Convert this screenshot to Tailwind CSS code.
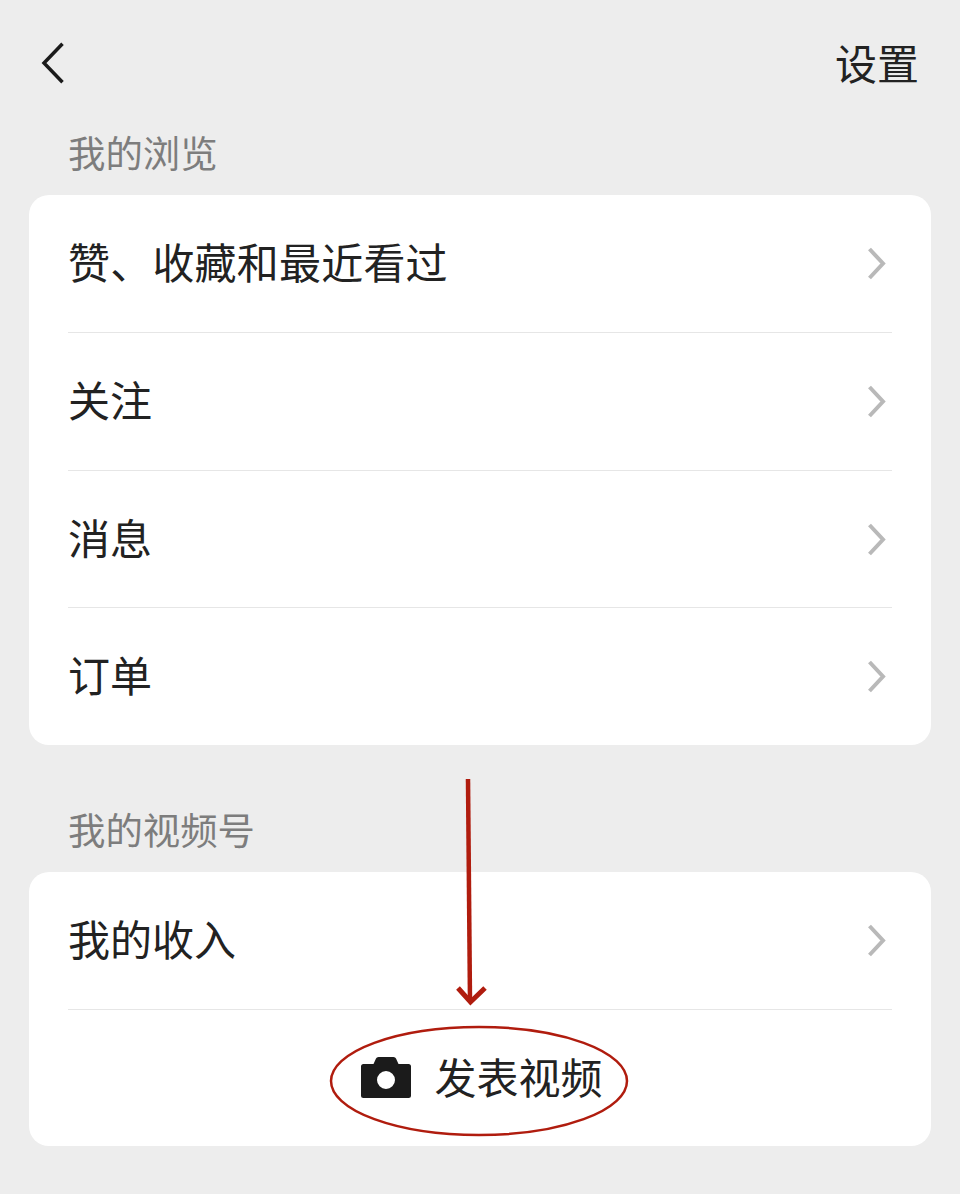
<!DOCTYPE html>
<html lang="zh-CN">
<head>
    <meta charset="UTF-8">
    <meta name="viewport" content="width=device-width, initial-scale=1.0">
    <title>我的</title>
    <script src="https://cdn.jsdelivr.net/npm/@tailwindcss/browser@4"></script>
</head>
<body class="bg-[#ededed] text-[#222222] font-['Noto_Sans_CJK_SC','Noto_Sans',sans-serif]">

<div class="relative w-[960px] h-[1194px] overflow-hidden px-[29px]">

    <!-- Header -->
    <div class="flex items-center justify-between h-[126px] pl-[10px] pr-[12px]">
        <svg class="w-[26px] h-[44px]" viewBox="0 0 26 44" fill="none" stroke="#1b1b1b" stroke-width="3.5">
            <path d="M23.5 2.8 L5 22 L23.5 41.2"/>
        </svg>
        <span class="text-[42px] leading-none pb-[2px]">设置</span>
    </div>

    <!-- My browsing -->
    <h2 class="h-[69px] pl-[39px] pt-[4px] text-[37.4px] leading-[44px] font-normal text-[#7d7d7d]">我的浏览</h2>
    <div class="bg-white rounded-[20px] px-[39px] divide-y divide-[#e6e6e6]">
        <div class="flex items-center justify-between h-[137.5px]">
            <span class="text-[42px] leading-none pb-[4px] tracking-[0.2px]">赞、收藏和最近看过</span>
            <svg class="w-[24px] h-[36px] mr-[2px]" viewBox="0 0 24 36" fill="none" stroke="#b9b9b9" stroke-width="4"><path d="M3.5 4 L17 18.5 L3.5 33"/></svg>
        </div>
        <div class="flex items-center justify-between h-[138px]">
            <span class="text-[42px] leading-none pb-[4px]">关注</span>
            <svg class="w-[24px] h-[36px] mr-[2px]" viewBox="0 0 24 36" fill="none" stroke="#b9b9b9" stroke-width="4"><path d="M3.5 4 L17 18.5 L3.5 33"/></svg>
        </div>
        <div class="flex items-center justify-between h-[137px]">
            <span class="text-[42px] leading-none pb-[4px]">消息</span>
            <svg class="w-[24px] h-[36px] mr-[2px]" viewBox="0 0 24 36" fill="none" stroke="#b9b9b9" stroke-width="4"><path d="M3.5 4 L17 18.5 L3.5 33"/></svg>
        </div>
        <div class="flex items-center justify-between h-[137.5px]">
            <span class="text-[42px] leading-none pb-[4px]">订单</span>
            <svg class="w-[24px] h-[36px] mr-[2px]" viewBox="0 0 24 36" fill="none" stroke="#b9b9b9" stroke-width="4"><path d="M3.5 4 L17 18.5 L3.5 33"/></svg>
        </div>
    </div>

    <!-- My channel -->
    <h2 class="h-[127px] pl-[39px] pt-[62px] text-[37.4px] leading-[44px] font-normal text-[#7d7d7d]">我的视频号</h2>
    <div class="bg-white rounded-[20px] px-[39px] divide-y divide-[#e6e6e6]">
        <div class="flex items-center justify-between h-[137.5px]">
            <span class="text-[42px] leading-none pb-[4px]">我的收入</span>
            <svg class="w-[24px] h-[36px] mr-[2px]" viewBox="0 0 24 36" fill="none" stroke="#b9b9b9" stroke-width="4"><path d="M3.5 4 L17 18.5 L3.5 33"/></svg>
        </div>
        <div class="flex items-center justify-center gap-[23px] h-[136.5px] pl-[4px]">
            <svg class="w-[50px] h-[41px]" viewBox="0 0 50 41" fill="#1b1b1b">
                <path fill-rule="evenodd" d="M15 1.5 Q15.6 0 17.5 0 H32.5 Q34.4 0 35 1.5 L37.5 7 H47.5 Q50 7 50 9.5 V38.5 Q50 41 47.5 41 H2.5 Q0 41 0 38.5 V9.5 Q0 7 2.5 7 H12.5 Z M25 14 A9 9 0 1 0 25 32 A9 9 0 1 0 25 14 Z"/>
            </svg>
            <span class="text-[42px] leading-none pb-[3px]">发表视频</span>
        </div>
    </div>

    <!-- Red annotation -->
    <svg class="absolute left-0 top-0 w-[960px] h-[1194px] pointer-events-none" viewBox="0 0 960 1194" fill="none" stroke="#b01c0e">
        <path d="M468 779 L470 1002" stroke-width="4.5"/>
        <path d="M458 988 L470.5 1002 L485 988" stroke-width="5"/>
        <ellipse cx="479" cy="1081" rx="148" ry="54" stroke-width="2.5"/>
    </svg>
</div>

</body>
</html>
